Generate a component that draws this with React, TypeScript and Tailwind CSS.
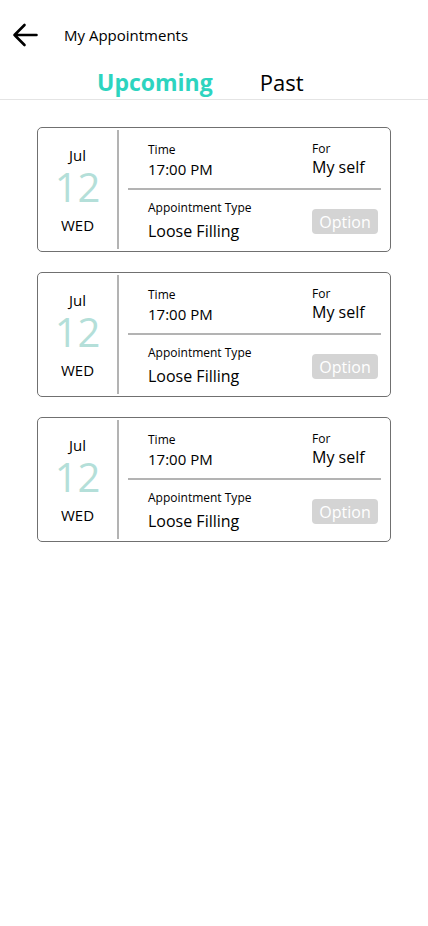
import React from 'react'

const appointments = [1, 2, 3].map((id) => ({
    id,
    month: 'Jul',
    day: '12',
    weekday: 'WED',
    time: '17:00 PM',
    forWhom: 'My self',
    type: 'Loose Filling',
}))

type Appointment = (typeof appointments)[number]

function AppointmentCard({ item }: { item: Appointment }) {
    return (
        <div className="flex h-[125px] rounded-[5px] border border-[#707070] bg-white py-[2px]">
            {/* Date column */}
            <div className="flex w-[79px] flex-col items-center pt-[15px]">
                <div className="text-[15px] leading-[20px] text-black">{item.month}</div>
                <div className="mt-[2px] text-[40px] leading-[40px] text-[#b4dfd9]">{item.day}</div>
                <div className="mt-[8px] text-[15px] leading-[20px] text-black">{item.weekday}</div>
            </div>
            <div className="w-[2px] bg-[#b3b3b3]" />

            {/* Details */}
            <div className="flex flex-1 flex-col px-[9px]">
                <div className="flex h-[58px] pl-5">
                    <div className="flex-1 pt-[12px]">
                        <div className="text-[12px] leading-[16px] text-black">Time</div>
                        <div className="mt-[1px] text-[15px] leading-[20px] text-black">{item.time}</div>
                    </div>
                    <div className="w-[69px] pt-[11px]">
                        <div className="text-[12px] leading-[16px] text-black">For</div>
                        <div className="text-[16px] leading-[20px] text-black">{item.forWhom}</div>
                    </div>
                </div>
                <div className="h-[2px] bg-[#b3b3b3]" />
                <div className="flex flex-1 pl-5">
                    <div className="flex-1 pt-[10px]">
                        <div className="text-[12px] leading-[16px] text-black">Appointment Type</div>
                        <div className="mt-[4px] text-[16px] leading-[22px] text-black">{item.type}</div>
                    </div>
                    <div className="w-[69px] pt-[19px]">
                        <button className="flex h-[25px] w-[66px] items-center justify-center rounded-[4px] bg-[#d4d4d4] text-[16px] text-white">
                            Option
                        </button>
                    </div>
                </div>
            </div>
        </div>
    )
}

export default function App() {
    return (
        <div className="min-h-[926px] w-[428px] bg-white font-['Open_Sans',sans-serif]">
            {/* Header */}
            <div className="flex h-[70px] items-center pl-[12px]">
                <svg width="26" height="24" viewBox="0 0 26 24" fill="none" stroke="black" strokeWidth="2.6" strokeLinecap="round" strokeLinejoin="round">
                    <path d="M24.5 12H2.5M12.5 2L2.5 12L12.5 22" />
                </svg>
                <span className="ml-[26px] text-[15px] text-black">My Appointments</span>
            </div>

            {/* Tabs */}
            <div className="flex h-[30px] items-center gap-[47px] border-b border-[#e4e4e4] pl-[97px] pb-[5px]">
                <span className="text-[23px] font-bold leading-[26px] text-[#2dd4bf]">Upcoming</span>
                <span className="text-[22px] leading-[26px] text-black">Past</span>
            </div>

            {/* List */}
            <div className="flex flex-col gap-[20px] px-[37px] pt-[27px]">
                {appointments.map((a) => (
                    <AppointmentCard key={a.id} item={a} />
                ))}
            </div>
        </div>
    )
}
